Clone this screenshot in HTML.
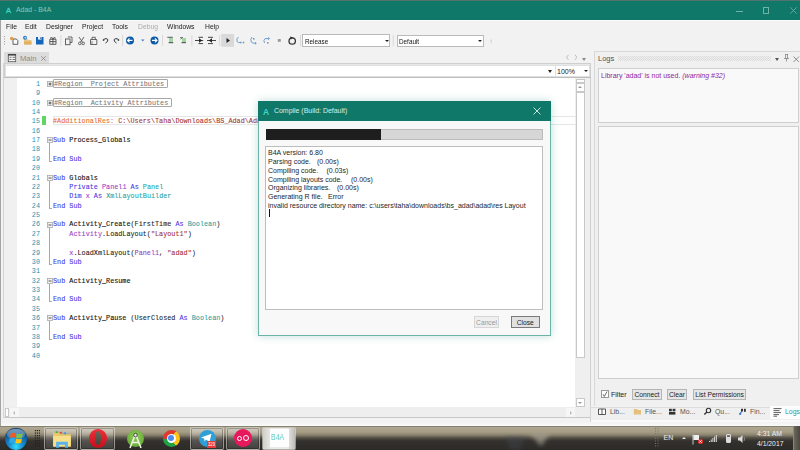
<!DOCTYPE html>
<html><head><meta charset="utf-8">
<style>
*{margin:0;padding:0;box-sizing:border-box}
html,body{width:800px;height:450px;overflow:hidden;background:#f2f2f2;font-family:"Liberation Sans",sans-serif;position:relative}
.a{position:absolute}
.t{position:absolute;white-space:pre;line-height:1}
#title{left:0;top:0;width:800px;height:20px;background:#0f7868;border-top:1px solid #52736d}
#menu{left:0;top:20px;width:800px;height:13px;background:#f2f2f2;border-top:0.6px solid #fbfbfb}
#menu span{position:absolute;top:2px;font-size:7.7px;color:#1a1a1a;line-height:1;transform:scaleX(0.88);transform-origin:0 0}
#tool{left:0;top:33px;width:800px;height:17px;background:#f2f2f2}
.sep{position:absolute;top:35px;width:1px;height:12px;background:#d0d0d0}
.cl{font-family:"Liberation Mono",monospace;font-size:6.8px;position:absolute;left:53px;white-space:pre;line-height:1;color:#222;-webkit-text-stroke:0.08px currentColor}
.ln{font-family:"Liberation Mono",monospace;font-size:6.8px;position:absolute;left:17px;width:23px;text-align:right;color:#2b91af;line-height:1}
.kw{color:#4436e6}.id{-webkit-text-stroke:0.12px #111;color:#111}.pv{color:#9a3cc4}.ty{color:#27a3a3}.st{color:#a33030}.gr{color:#7a7a7a}.or{color:#e86c2c}
.fold{position:absolute;left:47px;width:5px;height:5px;border:0.8px solid #a0a0a0;background:#e4e4e4}
.fold:after{content:"";position:absolute;left:0.7px;top:1.7px;width:2.2px;height:0.8px;background:#333}
.fold.plus:before{content:"";position:absolute;left:1.4px;top:1px;width:0.8px;height:2.2px;background:#333}
.vl{position:absolute;left:49px;width:1px;background:#a8a8a8}
.dlg{font-size:7px;color:#1e1e1e}
.btn{position:absolute;border:1px solid #b4b4b4;background:#e5e5e5;font-size:6.7px;color:#222;text-align:center;line-height:10px}
#task{left:0;top:426px;width:800px;height:24px;background:#2a2925}
.tb{border:1px solid rgba(215,212,200,0.55);border-radius:2px;background:linear-gradient(rgba(255,255,255,0.42),rgba(255,255,255,0.2) 40%,rgba(255,255,255,0.1));box-shadow:inset 0 0 0 1px rgba(0,0,0,0.25)}
</style></head><body>
<!-- Title bar -->
<div id="title" class="a">
  <div class="t" style="left:6px;top:6px;font-size:7.5px;color:#3fd6c4;-webkit-text-stroke:0.3px #3fd6c4">A</div>
  <div class="t" style="left:16px;top:6px;font-size:6.9px;color:#8cc6bc">Adad - B4A</div>
  <div class="a" style="left:736px;top:9.5px;width:7px;height:0.8px;background:#72b3a8"></div>
  <div class="a" style="left:762.5px;top:6px;width:6.5px;height:6.5px;border:0.8px solid #72b3a8"></div>
  <svg class="a" style="left:789.5px;top:6px" width="7" height="7"><path d="M0.3 0.3L6.7 6.7M6.7 0.3L0.3 6.7" stroke="#72b3a8" stroke-width="0.8"/></svg>
</div>
<!-- Menu -->
<div id="menu" class="a">
  <span style="left:6px">File</span>
  <span style="left:25px">Edit</span>
  <span style="left:46px">Designer</span>
  <span style="left:82px">Project</span>
  <span style="left:112px">Tools</span>
  <span style="left:138px;color:#aaa">Debug</span>
  <span style="left:167px">Windows</span>
  <span style="left:205px">Help</span>
</div>
<!-- Toolbar -->
<div id="tool" class="a"></div>
<svg class="a" style="left:0;top:30px" width="500" height="20" viewBox="0 30 500 20">
<g fill="#9a9a9a"><rect x="4" y="36" width="1" height="1"/><rect x="4" y="38.5" width="1" height="1"/><rect x="4" y="41" width="1" height="1"/><rect x="4" y="43.5" width="1" height="1"/></g>
<!-- new -->
<path d="M13 39H16.3L17.8 40.5V44.3H13Z" fill="#fafafa" stroke="#444" stroke-width="0.85"/>
<circle cx="11.7" cy="38.5" r="1.8" fill="#e0a050"/>
<!-- open -->
<path d="M24 39H27.5L28.5 40H31.5V44.5H24Z" fill="#e8c58a"/><path d="M24 41.5H31.5V44.5H24Z" fill="#e0b060"/>
<circle cx="25" cy="37.8" r="2" fill="#2d7dd2"/><path d="M24.2 37.8L25.8 36.8V38.8Z" fill="#fff"/>
<!-- save -->
<path d="M36 37H43.5V44.5H36Z" fill="#1565b8"/><rect x="38" y="37" width="3.5" height="2.6" fill="#e8eef8"/><rect x="40.2" y="37.4" width="0.9" height="1.6" fill="#1565b8"/>
<!-- save all/project -->
<path d="M49.8 39.3H56V44.3H49.8ZM52.9 37.5V44.3M49.8 41.6H56M52.9 38.8Q50 36 50.8 38.8M52.9 38.8Q55.8 36 55 38.8" fill="none" stroke="#444" stroke-width="0.85"/>
<rect x="60.5" y="35" width="0.8" height="11" fill="#d2d2d2"/>
<!-- copy -->
<path d="M67.8 37H72V42.5H70" fill="none" stroke="#555" stroke-width="0.9"/><rect x="65.5" y="39" width="4.5" height="5.7" fill="none" stroke="#555" stroke-width="0.9"/>
<!-- cut -->
<path d="M79 37L82.5 42.2M84 37L80.5 42.2" stroke="#555" stroke-width="0.9"/><circle cx="79.8" cy="43.4" r="1.3" fill="none" stroke="#555" stroke-width="0.9"/><circle cx="83.2" cy="43.4" r="1.3" fill="none" stroke="#555" stroke-width="0.9"/>
<!-- paste -->
<path d="M90.5 39.5H96.8V44.5H90.5Z" fill="none" stroke="#555" stroke-width="0.9"/><path d="M92 39.5V37.3H95.3V39.5" fill="none" stroke="#555" stroke-width="0.9"/><rect x="91" y="41" width="2" height="3" fill="#555" opacity="0.35"/>
<!-- undo/redo -->
<path d="M103.5 39.5Q106.5 37.5 107.8 39.5Q108.5 41.5 105.5 43" fill="none" stroke="#333" stroke-width="1"/><path d="M103 38.5L104.5 41L102.8 40.8Z" fill="#333"/>
<path d="M118.5 39.5Q115.5 37.5 114.2 39.5Q113.5 41.5 116.5 43" fill="none" stroke="#333" stroke-width="1"/><path d="M119 38.5L117.5 41L119.2 40.8Z" fill="#333"/>
<rect x="122" y="35" width="0.8" height="11" fill="#d2d2d2"/>
<!-- back/fwd -->
<circle cx="130" cy="40.4" r="4" fill="#0d5aa6"/><path d="M127.5 40.4H132.5M129.5 38.4L127.5 40.4L129.5 42.4" fill="none" stroke="#fff" stroke-width="1.1"/>
<path d="M141 39.5H144.5L142.75 41.5Z" fill="#4d7fc0"/>
<circle cx="154.5" cy="40.4" r="4" fill="#0d5aa6"/><path d="M152 40.4H157M155 38.4L157 40.4L155 42.4" fill="none" stroke="#fff" stroke-width="1.1"/>
<rect x="162.2" y="35" width="0.8" height="11" fill="#d2d2d2"/>
<!-- comment/uncomment -->
<path d="M167.3 37.3H172.8" stroke="#444" stroke-width="0.9"/><rect x="169" y="38" width="4" height="4.5" fill="#a3d6a3"/><path d="M168.6 42.7H173.2" stroke="#333" stroke-width="0.9"/>
<path d="M180.3 37.5H181.8M180.5 39L183 37.3" stroke="#444" stroke-width="0.8"/><rect x="182" y="38" width="4" height="4.5" fill="#a3d6a3"/><path d="M181.5 42.7H186" stroke="#333" stroke-width="0.9"/>
<rect x="191.5" y="35" width="0.8" height="11" fill="#d2d2d2"/>
<!-- indent/outdent -->
<path d="M198.5 37.3H203M195 40.5H203.2M198.5 43.6H203" stroke="#333" stroke-width="0.9"/><path d="M199 38.3L202.2 40.5L199 42.7Z" fill="#222"/>
<path d="M208 37.3H213M207 40.5H216M208 43.6H213" stroke="#333" stroke-width="0.9"/><path d="M212 38.3L208.8 40.5L212 42.7Z" fill="#222"/>
<rect x="219.3" y="35" width="0.8" height="11" fill="#d2d2d2"/>
<!-- run -->
<rect x="221.2" y="34" width="12.8" height="12.8" fill="#d9d9d9"/>
<path d="M226.5 38L230 40.5L226.5 43Z" fill="#222"/>
<!-- steps -->
<path d="M238.5 37Q236 38.5 237 41.5Q238 43 241 42.6" fill="none" stroke="#6ea0d0" stroke-width="1"/><path d="M240.5 41.2L242 42.6L240.5 44Z" fill="#6ea0d0"/><circle cx="243.5" cy="42.5" r="0.9" fill="#999"/>
<path d="M252 37Q250 39 251.3 42Q252.5 43.5 255.5 43.3" fill="none" stroke="#6ea0d0" stroke-width="1"/><path d="M255 41.8L256.8 43.3L255 44.8Z" fill="#6ea0d0"/><circle cx="253.8" cy="38.8" r="0.9" fill="#888"/>
<path d="M264.5 43Q263 40 265 38.6H268.5" fill="none" stroke="#6ea0d0" stroke-width="1"/><path d="M268 37L270 38.6L268 40.2Z" fill="#6ea0d0"/><circle cx="267.8" cy="42.8" r="0.9" fill="#888"/>
<rect x="277.8" y="39" width="3" height="2.8" fill="#9a9a9a"/>
<!-- restart -->
<circle cx="292.2" cy="41" r="3.2" fill="none" stroke="#333" stroke-width="1.3"/><path d="M290 36.5L293.5 37.6L290.8 39.6Z" fill="#333"/>
<rect x="300.2" y="35" width="0.8" height="11" fill="#d2d2d2"/>
<rect x="392.8" y="35" width="0.8" height="11" fill="#d2d2d2"/>
<path d="M490.5 40.2H492M490.5 42.2H492" stroke="#aaa" stroke-width="0.6"/>
</svg>
<!-- combos -->
<div class="a" style="left:302px;top:34px;width:88px;height:12.8px;background:#fff;border:1px solid #bababa"></div>
<div class="t" style="left:304.5px;top:37.6px;font-size:7.4px;color:#111;transform:scaleX(0.86);transform-origin:0 0">Release</div>
<div class="a" style="left:384.5px;top:39.5px;width:0;height:0;border-left:2.3px solid transparent;border-right:2.3px solid transparent;border-top:2.8px solid #222"></div>
<div class="a" style="left:396.5px;top:34.6px;width:87.5px;height:12.2px;background:#fff;border:1px solid #bababa"></div>
<div class="t" style="left:398.5px;top:37.9px;font-size:7.4px;color:#111;transform:scaleX(0.86);transform-origin:0 0">Default</div>
<div class="a" style="left:478.3px;top:40px;width:0;height:0;border-left:2.3px solid transparent;border-right:2.3px solid transparent;border-top:2.8px solid #222"></div>

<!-- left window border -->
<div class="a" style="left:0;top:20px;width:1px;height:406px;background:#a4a4a4"></div>
<div class="a" style="left:3px;top:63px;width:1px;height:355px;background:#d4d4d4"></div>

<!-- Tab strip -->
<div class="a" style="left:4px;top:52px;width:45px;height:11px;background:#dcdcdc"></div>
<svg class="a" style="left:7px;top:53px" width="10" height="10" viewBox="7 53 10 10">
<rect x="8.3" y="54.3" width="7.4" height="7.4" fill="#f4f4f4" stroke="#555" stroke-width="0.8"/>
<rect x="8" y="54" width="8" height="1.6" fill="#444"/>
<path d="M9.5 57.3H11.5M12.5 57.3H15M9.5 59.5H11.5M12.5 59.5H15" stroke="#555" stroke-width="0.8"/>
</svg>
<div class="t" style="left:20px;top:54.5px;font-size:7.6px;color:#8a8a8a">Main</div>
<svg class="a" style="left:41px;top:56px" width="5" height="5"><path d="M0.3 0.3L4.7 4.7M4.7 0.3L0.3 4.7" stroke="#808080" stroke-width="0.8"/></svg>
<svg class="a" style="left:565px;top:54px" width="12" height="7"><path d="M3.5 0.8L1.5 3.3L3.5 5.8M10 0.8L12 3.3L10 5.8" fill="none" stroke="#b4b4b4" stroke-width="0.9"/></svg>
<div class="a" style="left:582px;top:58px;width:0;height:0;border-left:2.5px solid transparent;border-right:2.5px solid transparent;border-top:3px solid #888"></div>

<!-- editor frame -->
<div class="a" style="left:4px;top:63px;width:587px;height:355px;background:#e8e8e8;border:1px solid #cfcfcf"></div>
<!-- combo row -->
<div class="a" style="left:5px;top:65px;width:551px;height:12px;background:#fff;border:1px solid #e0e0e0"></div>
<div class="a" style="left:548px;top:70px;width:0;height:0;border-left:2.5px solid transparent;border-right:2.5px solid transparent;border-top:3px solid #222"></div>
<div class="a" style="left:555px;top:65px;width:35px;height:12px;background:#fff;border:1px solid #e0e0e0"></div>
<div class="t" style="left:557px;top:68.3px;font-size:7px;color:#1a1a1a">100%</div>
<div class="a" style="left:583.5px;top:70px;width:0;height:0;border-left:2.3px solid transparent;border-right:2.3px solid transparent;border-top:2.8px solid #222"></div>
<div class="a" style="left:4px;top:77px;width:587px;height:1px;background:#bdbdbd"></div>

<!-- gutter + code area -->
<div class="a" style="left:4px;top:78px;width:13px;height:329px;background:#f0f0f0"></div>
<div class="a" style="left:17px;top:78px;width:558px;height:329px;background:#fff"></div>
<!-- vertical scrollbar -->
<div class="a" style="left:575px;top:78px;width:15px;height:329px;background:#efefef"></div>
<div class="a" style="left:575.5px;top:79px;width:9px;height:3.5px;background:#fff;border:1px solid #c8c8c8"></div>
<div class="a" style="left:575.5px;top:82.5px;width:9px;height:9.5px;background:#fff;border:1px solid #c8c8c8"></div>
<div class="a" style="left:578px;top:86px;width:0;height:0;border-left:2px solid transparent;border-right:2px solid transparent;border-bottom:2px solid #999"></div>
<div class="a" style="left:575.5px;top:92px;width:9px;height:266px;background:#fff;border:1px solid #c8c8c8"></div>
<div class="a" style="left:575.5px;top:397.5px;width:9px;height:9.5px;background:#fff;border:1px solid #c8c8c8"></div>
<div class="a" style="left:578px;top:401.5px;width:0;height:0;border-left:2px solid transparent;border-right:2px solid transparent;border-top:2px solid #999"></div>
<!-- horizontal scrollbar -->
<div class="a" style="left:4px;top:407px;width:587px;height:11px;background:#eeeeee;border-bottom:1px solid #c8c8c8"></div>
<div class="a" style="left:5px;top:408px;width:4px;height:9px;background:#fff;border:1px solid #c8c8c8"></div>
<div class="a" style="left:10px;top:408px;width:9px;height:9px;background:#f6f6f6"></div>
<div class="a" style="left:13px;top:410.5px;width:0;height:0;border-top:2px solid transparent;border-bottom:2px solid transparent;border-right:2px solid #bbb"></div>
<div class="a" style="left:566px;top:408px;width:8.5px;height:9px;background:#f6f6f6"></div>
<div class="a" style="left:569.5px;top:410.5px;width:0;height:0;border-top:2px solid transparent;border-bottom:2px solid transparent;border-left:2px solid #bbb"></div>

<!-- current line highlight (line 15) -->
<div class="a" style="left:53px;top:116px;width:523px;height:9px;border:1px solid #e6e6e6;border-right:none"></div>
<div class="a" style="left:42px;top:116px;width:3.5px;height:9px;background:#5fd65f"></div>

<div id="code">
<div class="ln" style="top:80.90px">1</div>
<div class="a" style="left:53px;top:78.90px;width:114.5px;height:9.2px;border:1px solid #a8a8a8;border-radius:1px;background:#fff"></div>
<div class="cl gr" style="top:80.90px;left:54px">#Region  Project Attributes</div>
<svg class="a" style="left:46.5px;top:81.10px" width="6" height="6"><rect x="0.5" y="0.5" width="5" height="5" fill="#f2f2f2" stroke="#a8a8a8" stroke-width="0.8"/><path d="M1.5 3H4.5M3 1.5V4.5" stroke="#333" stroke-width="0.8"/></svg>
<div class="ln" style="top:90.27px">9</div>
<div class="ln" style="top:99.64px">10</div>
<div class="a" style="left:53px;top:97.64px;width:118.5px;height:9.2px;border:1px solid #a8a8a8;border-radius:1px;background:#fff"></div>
<div class="cl gr" style="top:99.64px;left:54px">#Region  Activity Attributes</div>
<svg class="a" style="left:46.5px;top:99.84px" width="6" height="6"><rect x="0.5" y="0.5" width="5" height="5" fill="#f2f2f2" stroke="#a8a8a8" stroke-width="0.8"/><path d="M1.5 3H4.5M3 1.5V4.5" stroke="#333" stroke-width="0.8"/></svg>
<div class="ln" style="top:109.01px">14</div>
<div class="ln" style="top:118.38px">15</div>
<div class="cl" style="top:118.38px"><span class="or">#AdditionalRes:</span> <span class="st">C:\Users\Taha\Downloads\BS_Adad\Adad\res</span></div>
<div class="ln" style="top:127.75px">16</div>
<div class="ln" style="top:137.12px">17</div>
<div class="cl" style="top:137.12px"><span class="kw">Sub</span> <span class="id">Process_Globals</span></div>
<svg class="a" style="left:46.5px;top:137.32px" width="6" height="6"><rect x="0.5" y="0.5" width="5" height="5" fill="#f2f2f2" stroke="#a8a8a8" stroke-width="0.8"/><path d="M1.5 3H4.5" stroke="#333" stroke-width="0.8"/></svg>
<div class="ln" style="top:146.49px">18</div>
<div class="ln" style="top:155.86px">19</div>
<div class="cl" style="top:155.86px"><span class="kw">End Sub</span></div>
<div class="ln" style="top:165.23px">20</div>
<div class="ln" style="top:174.60px">21</div>
<div class="cl" style="top:174.60px"><span class="kw">Sub</span> <span class="id">Globals</span></div>
<svg class="a" style="left:46.5px;top:174.80px" width="6" height="6"><rect x="0.5" y="0.5" width="5" height="5" fill="#f2f2f2" stroke="#a8a8a8" stroke-width="0.8"/><path d="M1.5 3H4.5" stroke="#333" stroke-width="0.8"/></svg>
<div class="ln" style="top:183.97px">22</div>
<div class="cl" style="top:183.97px">    <span class="kw">Private</span> <span class="pv">Panel1</span> <span class="kw">As</span> <span class="ty">Panel</span></div>
<div class="ln" style="top:193.34px">23</div>
<div class="cl" style="top:193.34px">    <span class="kw">Dim</span> <span class="pv">x</span> <span class="kw">As</span> <span class="ty">XmlLayoutBuilder</span></div>
<div class="ln" style="top:202.71px">24</div>
<div class="cl" style="top:202.71px"><span class="kw">End Sub</span></div>
<div class="ln" style="top:212.08px">25</div>
<div class="ln" style="top:221.45px">26</div>
<div class="cl" style="top:221.45px"><span class="kw">Sub</span> <span class="id">Activity_Create</span>(FirstTime <span class="kw">As</span> <span class="ty">Boolean</span>)</div>
<svg class="a" style="left:46.5px;top:221.65px" width="6" height="6"><rect x="0.5" y="0.5" width="5" height="5" fill="#f2f2f2" stroke="#a8a8a8" stroke-width="0.8"/><path d="M1.5 3H4.5" stroke="#333" stroke-width="0.8"/></svg>
<div class="ln" style="top:230.82px">27</div>
<div class="cl" style="top:230.82px">    <span class="pv">Activity</span>.LoadLayout(<span class="st">"Layout1"</span>)</div>
<div class="ln" style="top:240.19px">28</div>
<div class="ln" style="top:249.56px">29</div>
<div class="cl" style="top:249.56px">    <span class="pv">x</span>.LoadXmlLayout(<span class="pv">Panel1</span>, <span class="st">"adad"</span>)</div>
<div class="ln" style="top:258.93px">30</div>
<div class="cl" style="top:258.93px"><span class="kw">End Sub</span></div>
<div class="ln" style="top:268.30px">31</div>
<div class="ln" style="top:277.67px">32</div>
<div class="cl" style="top:277.67px"><span class="kw">Sub</span> <span class="id">Activity_Resume</span></div>
<svg class="a" style="left:46.5px;top:277.87px" width="6" height="6"><rect x="0.5" y="0.5" width="5" height="5" fill="#f2f2f2" stroke="#a8a8a8" stroke-width="0.8"/><path d="M1.5 3H4.5" stroke="#333" stroke-width="0.8"/></svg>
<div class="ln" style="top:287.04px">33</div>
<div class="ln" style="top:296.41px">34</div>
<div class="cl" style="top:296.41px"><span class="kw">End Sub</span></div>
<div class="ln" style="top:305.78px">35</div>
<div class="ln" style="top:315.15px">36</div>
<div class="cl" style="top:315.15px"><span class="kw">Sub</span> <span class="id">Activity_Pause</span> (UserClosed <span class="kw">As</span> <span class="ty">Boolean</span>)</div>
<svg class="a" style="left:46.5px;top:315.35px" width="6" height="6"><rect x="0.5" y="0.5" width="5" height="5" fill="#f2f2f2" stroke="#a8a8a8" stroke-width="0.8"/><path d="M1.5 3H4.5" stroke="#333" stroke-width="0.8"/></svg>
<div class="ln" style="top:324.52px">37</div>
<div class="ln" style="top:333.89px">38</div>
<div class="cl" style="top:333.89px"><span class="kw">End Sub</span></div>
<div class="ln" style="top:343.26px">39</div>
<div class="ln" style="top:352.63px">40</div>
<div class="vl" style="top:143.12px;height:17.74px"></div>
<div class="a" style="left:49px;top:160.86px;width:3px;height:1px;background:#a8a8a8"></div>
<div class="vl" style="top:180.60px;height:27.11px"></div>
<div class="a" style="left:49px;top:207.71px;width:3px;height:1px;background:#a8a8a8"></div>
<div class="vl" style="top:227.45px;height:36.48px"></div>
<div class="a" style="left:49px;top:263.93px;width:3px;height:1px;background:#a8a8a8"></div>
<div class="vl" style="top:283.67px;height:17.74px"></div>
<div class="a" style="left:49px;top:301.41px;width:3px;height:1px;background:#a8a8a8"></div>
<div class="vl" style="top:321.15px;height:17.74px"></div>
<div class="a" style="left:49px;top:338.89px;width:3px;height:1px;background:#a8a8a8"></div>
</div><!--endcode-->

<!-- Logs panel -->
<div class="a" style="left:594px;top:51px;width:206px;height:355px;background:#f0f0f0;border-left:1px solid #d8d8d8;border-top:1px solid #d8d8d8"></div>
<div class="t" style="left:598px;top:55px;font-size:7.5px;color:#505050">Logs</div>
<svg class="a" style="left:618px;top:56px" width="153" height="5"><defs><pattern id="hp" width="2" height="2" patternUnits="userSpaceOnUse"><rect x="0" y="0" width="1" height="1" fill="#dadada"/><rect x="1" y="1" width="1" height="1" fill="#dadada"/></pattern></defs><rect width="153" height="5" fill="url(#hp)"/></svg>
<div class="a" style="left:775px;top:58px;width:0;height:0;border-left:2.5px solid transparent;border-right:2.5px solid transparent;border-top:3px solid #555"></div>
<svg class="a" style="left:783px;top:54px" width="7" height="8"><path d="M2 0.5H5M2.5 0.5V4.5M4.5 0.5V4.5M1 4.5H6M3.5 4.5V7.5" fill="none" stroke="#666" stroke-width="0.6"/></svg>
<svg class="a" style="left:792.5px;top:55.5px" width="7" height="7"><path d="M0.5 0.5L6 6M6 0.5L0.5 6" stroke="#666" stroke-width="0.7"/></svg>
<div class="a" style="left:598px;top:68px;width:201px;height:55px;background:#f9f9f9;border:1px solid #cfcfcf"></div>
<div class="t" style="left:601px;top:71.5px;font-size:7px;color:#8f26a0">Library 'adad' is not used. <i>(warning #32)</i></div>
<div class="a" style="left:598px;top:126px;width:201px;height:253px;background:#f9f9f9;border:1px solid #cfcfcf"></div>
<div class="a" style="left:601px;top:390px;width:7.5px;height:8px;background:#fff;border:1px solid #999"></div>
<svg class="a" style="left:601px;top:390px" width="8" height="8"><path d="M2 4.2L3.3 6.5L6 1.5" fill="none" stroke="#333" stroke-width="0.7"/></svg>
<div class="t" style="left:611px;top:391px;font-size:7px;color:#222">Filter</div>
<div class="btn" style="left:632px;top:389px;width:30px;height:11px">Connect</div>
<div class="btn" style="left:667px;top:389px;width:20px;height:11px">Clear</div>
<div class="btn" style="left:693px;top:389px;width:53px;height:11px">List Permissions</div>
<!-- bottom tabs -->
<div class="a" style="left:591px;top:406.5px;width:209px;height:14px;background:#efefef;border-top:1px solid #dcdcdc"></div>
<div class="a" style="left:591px;top:420px;width:209px;height:2px;background:#fafafa"></div>
<div class="a" style="left:590px;top:406px;width:1px;height:16px;background:#d4d4d4"></div>
<div class="a" style="left:769.5px;top:406px;width:31px;height:13px;background:#fdfdfd"></div>
<svg class="a" style="left:594px;top:404px" width="206" height="16" viewBox="594 404 206 16">
<path d="M598.5 409H602V414.5H598.5ZM602 409H605.5V414.5H602" fill="#fff" stroke="#444" stroke-width="0.9"/>
<path d="M633.8 409H637L637.8 410H641V414.6H633.8Z" fill="#e5c07b"/>
<rect x="669" y="408.8" width="2.8" height="2.5" fill="#333"/><rect x="672.6" y="408.8" width="2.8" height="2.5" fill="#333"/><rect x="669" y="412" width="6.4" height="2.6" fill="#333"/>
<circle cx="708.5" cy="410.5" r="2.2" fill="none" stroke="#333" stroke-width="1.1"/><path d="M707 412L704.3 414.6" stroke="#333" stroke-width="1.4"/>
<path d="M739.5 414.5L742 411" stroke="#2d6fd0" stroke-width="1.1"/><rect x="741" y="408.8" width="2" height="2.6" fill="#333"/><rect x="744" y="408.8" width="1.8" height="3" fill="#333"/><circle cx="740.3" cy="413.8" r="1" fill="#2d6fd0"/>
<path d="M773.5 408.6H781.5M773.5 410.6H779.5M773.5 412.6H781M773.5 414.6H779M773.5 416.2H777" stroke="#333" stroke-width="0.8"/>
</svg>
<div class="t" style="left:610px;top:408.8px;font-size:6.9px;color:#555">Lib...</div>
<div class="t" style="left:645px;top:408.8px;font-size:6.9px;color:#555">File...</div>
<div class="t" style="left:680px;top:408.8px;font-size:6.9px;color:#555">Mo...</div>
<div class="t" style="left:715px;top:408.8px;font-size:6.9px;color:#555">Qu...</div>
<div class="t" style="left:750px;top:408.8px;font-size:6.9px;color:#555">Fin...</div>
<div class="t" style="left:785px;top:408.8px;font-size:6.9px;color:#1a9b9c">Logs</div>

<!-- Dialog -->
<div class="a" style="left:257.5px;top:101px;width:293px;height:235px;background:#f8f8f8;border:1px solid #6bb5a8;box-shadow:0 0 8px rgba(80,160,150,0.35)"></div>
<div class="a" style="left:257.5px;top:101px;width:293px;height:19.5px;background:#0f7868"></div>
<div class="t" style="left:263px;top:107.5px;font-size:8.5px;font-weight:bold;color:#3fd6c4">A</div>
<div class="t" style="left:274px;top:107.8px;font-size:6.95px;color:#d9efeb">Compile (Build: Default)</div>
<svg class="a" style="left:533px;top:107px" width="8" height="8"><path d="M0.5 0.5L7.5 7.5M7.5 0.5L0.5 7.5" stroke="#d9efeb" stroke-width="0.9"/></svg>
<div class="a" style="left:266px;top:128.5px;width:277px;height:11px;background:#d6d6d6;border:1px solid #bcbcbc"></div>
<div class="a" style="left:266px;top:128.5px;width:115px;height:11px;background:#1e1e1e"></div>
<div class="a" style="left:265px;top:146px;width:278px;height:164px;background:#fff;border:1px solid #bdbdbd"></div>
<div class="t dlg" style="left:268px;top:149.1px">B4A version: 6.80</div>
<div class="t dlg" style="left:268px;top:157.9px">Parsing code.</div><div class="t dlg" style="left:317px;top:157.9px">(0.00s)</div>
<div class="t dlg" style="left:268px;top:166.7px">Compiling code.</div><div class="t dlg" style="left:326.5px;top:166.7px">(0.03s)</div>
<div class="t dlg" style="left:268px;top:175.5px">Compiling layouts code.</div><div class="t dlg" style="left:351px;top:175.5px">(0.00s)</div>
<div class="t dlg" style="left:268px;top:184.3px">Organizing libraries.</div><div class="t dlg" style="left:337px;top:184.3px">(0.00s)</div>
<div class="t dlg" style="left:268px;top:193.1px">Generating R file.</div><div class="t dlg" style="left:328px;top:193.1px">Error</div>
<div class="t dlg" style="left:268px;top:201.9px">invalid resource directory name: c:\users\taha\downloads\bs_adad\adad\res Layout</div>
<div class="a" style="left:268.5px;top:208.5px;width:0.8px;height:8.5px;background:#111"></div>
<div class="btn" style="left:474px;top:316px;width:25px;height:11.5px;line-height:11.5px;background:#efefef;border-color:#d6d6d6;color:#9a9a9a">Cancel</div>
<div class="btn" style="left:510.5px;top:316px;width:29.5px;height:11.5px;line-height:11.5px;border-color:#7a7a7a;background:#e1e1e1">Close</div>

<!-- window bottom -->
<div class="a" style="left:1px;top:422px;width:799px;height:4px;background:linear-gradient(#f2f2f2,#fafafa)"></div>
<!-- Taskbar -->
<div id="task" class="a"></div>
<div class="a" style="left:0;top:426px;width:800px;height:1px;background:#85826f"></div>
<div class="a" style="left:0;top:427px;width:800px;height:23px;background:linear-gradient(#aea690 0px,#a69d86 5px,#8a836f 8px,#514d44 11px,#33312d 14px,#2b2a27 24px)"></div>
<svg class="a" style="left:500px;top:432px" width="80" height="18"><defs><filter id="bl"><feGaussianBlur stdDeviation="2"/></filter></defs><path d="M30 2L50 2L41 14Z" fill="#b8b2a0" filter="url(#bl)" opacity="0.6"/><path d="M5 4L25 4L20 18L10 18Z" fill="#4a5060" filter="url(#bl)" opacity="0.3"/></svg>
<!-- start orb -->
<div class="a" style="left:5px;top:427.5px;width:22px;height:22px;border-radius:50%;background:radial-gradient(circle at 50% 85%,#30e0ff 0%,#1a8fd0 30%,#0f5a9a 65%,#0b3560 100%);box-shadow:0 0 1px #000"></div>
<div class="a" style="left:7px;top:428.5px;width:18px;height:10px;border-radius:50% 50% 45% 45%;background:linear-gradient(rgba(255,255,255,0.45),rgba(255,255,255,0.12))"></div>
<svg class="a" style="left:9px;top:431px" width="15" height="15" viewBox="0 0 14 14">
<path d="M1.6 2.2Q4 1 6.6 2.1L5.9 6.2Q3.4 5.3 0.9 6.3Z" fill="#f25a22"/>
<path d="M7.3 2.3Q10 3.4 12.8 2L12.1 6.1Q9.3 7.4 6.6 6.4Z" fill="#80c343"/>
<path d="M0.8 7.1Q3.3 6.1 5.8 7L5.1 11.1Q2.6 10.2 0.1 11.2Z" fill="#2ea9e9"/>
<path d="M6.5 7.2Q9.3 8.2 12 6.9L11.3 11Q8.5 12.3 5.8 11.3Z" fill="#fec20e"/>
</svg>
<!-- gripper -->
<svg class="a" style="left:33.5px;top:428.5px" width="7" height="19"><g fill="#24231f"><rect x="0.8" y="1" width="1.2" height="1.2"/><rect x="2.8" y="1" width="1.2" height="1.2"/><rect x="4.8" y="1" width="1.2" height="1.2"/><rect x="0.8" y="3.5" width="1.2" height="1.2"/><rect x="2.8" y="3.5" width="1.2" height="1.2"/><rect x="4.8" y="3.5" width="1.2" height="1.2"/><rect x="0.8" y="6" width="1.2" height="1.2"/><rect x="2.8" y="6" width="1.2" height="1.2"/><rect x="4.8" y="6" width="1.2" height="1.2"/><rect x="0.8" y="8.5" width="1.2" height="1.2"/><rect x="2.8" y="8.5" width="1.2" height="1.2"/><rect x="4.8" y="8.5" width="1.2" height="1.2"/><rect x="0.8" y="11" width="1.2" height="1.2"/><rect x="2.8" y="11" width="1.2" height="1.2"/><rect x="4.8" y="11" width="1.2" height="1.2"/><rect x="0.8" y="13.5" width="1.2" height="1.2"/><rect x="2.8" y="13.5" width="1.2" height="1.2"/><rect x="4.8" y="13.5" width="1.2" height="1.2"/><rect x="0.8" y="16" width="1.2" height="1.2"/><rect x="2.8" y="16" width="1.2" height="1.2"/><rect x="4.8" y="16" width="1.2" height="1.2"/></g></svg>
<!-- buttons -->
<div class="a tb" style="left:44px;top:426.5px;width:34px;height:23px"></div>
<div class="a tb" style="left:80px;top:426.5px;width:35px;height:23px"></div>
<div class="a tb" style="left:190px;top:426.5px;width:34px;height:23px"></div>
<div class="a tb" style="left:226px;top:426.5px;width:34px;height:23px"></div>
<div class="a tb" style="left:262px;top:426.5px;width:34px;height:23px"></div>
<!-- explorer -->
<svg class="a" style="left:51.5px;top:429.5px" width="20" height="19" viewBox="0.5 1 17 16">
<path d="M1.5 3H7L8 4.5H16.5V15H1.5Z" fill="#e8c96a"/>
<rect x="1.5" y="6" width="15" height="9" fill="#f7df8c"/>
<rect x="3.5" y="2" width="2" height="1.5" fill="#3cb44a"/><rect x="7" y="2.5" width="2" height="1.5" fill="#e34b3b"/><rect x="10.5" y="3" width="2" height="1.5" fill="#3b8fe3"/>
<path d="M4 11H14V16H11.5V13.5H6.5V16H4Z" fill="#5cb3ea"/>
</svg>
<!-- opera -->
<div class="a" style="left:89px;top:429px;width:17.5px;height:18.5px;border-radius:50%;background:linear-gradient(#f0303a,#c0101a)"></div>
<div class="a" style="left:94.5px;top:431.3px;width:6.5px;height:14px;border-radius:50%;background:linear-gradient(#6a665c,#45433d)"></div>
<!-- android studio -->
<div class="a" style="left:127px;top:430px;width:17px;height:17px;border-radius:50%;background:radial-gradient(circle at 50% 40%,#8fce57,#5e9e2e)"></div>
<svg class="a" style="left:125px;top:429px" width="21" height="21" viewBox="0 0 21 21">
<path d="M10.5 5L5 19M10.5 5L16 19M7.2 13.5H13.8" stroke="#eef2ea" stroke-width="1.6" fill="none"/>
<circle cx="10.5" cy="6" r="1.8" fill="none" stroke="#555" stroke-width="1"/>
</svg>
<!-- chrome -->
<div class="a" style="left:162.5px;top:429.5px;width:17px;height:17px;border-radius:50%;background:conic-gradient(from 30deg,#fbc21b 0 120deg,#1ea446 120deg 240deg,#e0382c 240deg 360deg)"></div>
<div class="a" style="left:166.5px;top:433.5px;width:9px;height:9px;border-radius:50%;background:#fff"></div>
<div class="a" style="left:167.8px;top:434.8px;width:6.4px;height:6.4px;border-radius:50%;background:#4c8bf5"></div>
<!-- telegram -->
<div class="a" style="left:198.5px;top:429.5px;width:17px;height:17px;border-radius:50%;background:#2f9fd8"></div>
<svg class="a" style="left:200px;top:433px" width="13" height="10" viewBox="0 0 13 10"><path d="M1 4.5L11.5 0.8L9.5 9L6 6.5L4.5 8.5L4.2 5.5Z" fill="#fff"/></svg>
<div class="a" style="left:207px;top:441px;width:9px;height:7px;background:#e83a3a"></div>
<div class="t" style="left:207.8px;top:442px;font-size:5px;color:#fff;transform:scaleX(0.85);transform-origin:0 0">320</div>
<!-- pink -->
<div class="a" style="left:234px;top:429px;width:18px;height:18px;border-radius:50%;background:#e8185c"></div>
<div class="a" style="left:236.6px;top:435.6px;width:5.4px;height:5.4px;border-radius:50%;border:1px solid #fff"></div>
<div class="a" style="left:242.6px;top:435px;width:6.4px;height:6.4px;border-radius:50%;border:1px solid #fff"></div>
<!-- b4a -->
<div class="a" style="left:263px;top:427.5px;width:32px;height:21px;background:linear-gradient(90deg,#cfcfcc,#e9e9e6 25%,#e9e9e6 75%,#bdbcb8)"></div>
<div class="a" style="left:270px;top:429px;width:19px;height:18px;background:#fdfdfd"></div>
<div class="t" style="left:270.5px;top:433.3px;font-size:8.6px;color:#5ccdcb;transform:scaleX(0.82);transform-origin:0 0">B4A</div>
<!-- tray -->
<svg class="a" style="left:654px;top:427px" width="6" height="22"><g fill="#77746a"><rect x="1" y="1" width="1" height="1"/><rect x="3.5" y="1" width="1" height="1"/><rect x="1" y="3.5" width="1" height="1"/><rect x="3.5" y="3.5" width="1" height="1"/><rect x="1" y="6" width="1" height="1"/><rect x="3.5" y="6" width="1" height="1"/><rect x="1" y="8.5" width="1" height="1"/><rect x="3.5" y="8.5" width="1" height="1"/><rect x="1" y="11" width="1" height="1"/><rect x="3.5" y="11" width="1" height="1"/><rect x="1" y="13.5" width="1" height="1"/><rect x="3.5" y="13.5" width="1" height="1"/><rect x="1" y="16" width="1" height="1"/><rect x="3.5" y="16" width="1" height="1"/><rect x="1" y="18.5" width="1" height="1"/><rect x="3.5" y="18.5" width="1" height="1"/></g></svg>
<div class="t" style="left:663.5px;top:433.5px;font-size:7px;color:#e8e8e8">EN</div>
<div class="a" style="left:682px;top:437px;width:0;height:0;border-left:2.5px solid transparent;border-right:2.5px solid transparent;border-bottom:2.5px solid #e8e8e8"></div>
<svg class="a" style="left:692px;top:434px" width="12" height="11" viewBox="0 0 12 11"><path d="M1 0.5V10.5" stroke="#ddd" stroke-width="0.9"/><path d="M1.5 1H7V6H1.5Z" fill="#eee"/><circle cx="8.5" cy="7.5" r="2.6" fill="#e03030"/><path d="M7.3 6.3L9.7 8.7M9.7 6.3L7.3 8.7" stroke="#fff" stroke-width="0.8"/></svg>
<svg class="a" style="left:708px;top:434px" width="9" height="9" viewBox="0 0 9 9"><path d="M1 8H2V7H1ZM2.7 8H3.7V5.5H2.7ZM4.4 8H5.4V4H4.4ZM6.1 8H7.1V2.5H6.1ZM7.8 8H8.8V1H7.8Z" fill="#ddd"/></svg>
<div class="a" style="left:725.5px;top:434px;width:5.5px;height:9px;border:1px solid #ddd;border-radius:1px"></div>
<div class="a" style="left:727px;top:437px;width:2.5px;height:4.5px;background:#ddd"></div>
<svg class="a" style="left:737px;top:434px" width="10" height="10" viewBox="0 0 10 10"><path d="M1 3.5H3L5.5 1V9L3 6.5H1Z" fill="#ddd"/><path d="M7 3Q8 5 7 7" stroke="#999" stroke-width="0.8" fill="none"/></svg>
<div class="t" style="left:757px;top:430.5px;font-size:6.8px;color:#f0f0f0">4:31 AM</div>
<div class="t" style="left:757px;top:440.5px;font-size:6.8px;color:#f0f0f0">4/1/2017</div>
<div class="a" style="left:793px;top:426px;width:7px;height:24px;background:linear-gradient(90deg,#6a675c,#4a483f);border-left:1px solid #8a877a"></div>
</body></html>
